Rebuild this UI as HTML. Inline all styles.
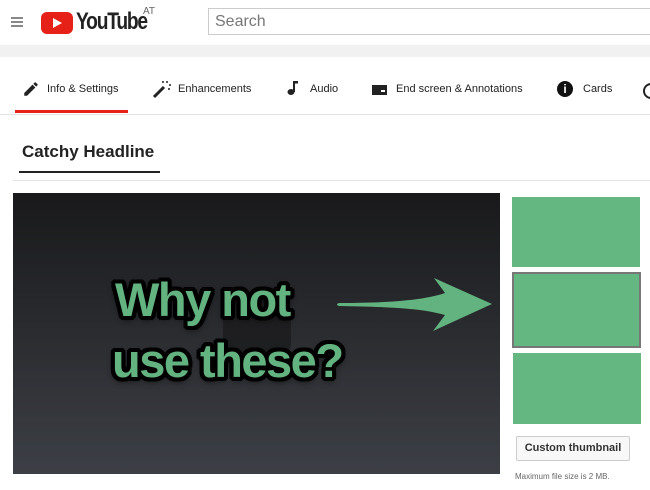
<!DOCTYPE html>
<html><head><style>
body{margin:0;width:650px;height:490px;overflow:hidden;background:#fff;font-family:"Liberation Sans",sans-serif;position:relative}
.a{position:absolute}
.tab{position:absolute;top:83px;font-size:11px;color:#222;white-space:nowrap}
.big{position:absolute;font-weight:bold;font-size:47px;color:#62b37f;letter-spacing:-1.5px;white-space:nowrap;
text-shadow:4px 0 0 #000,-4px 0 0 #000,0 4px 0 #000,0 -4px 0 #000,3px 3px 0 #000,-3px 3px 0 #000,3px -3px 0 #000,-3px -3px 0 #000,2px 4px 0 #000,-2px 4px 0 #000,2px -4px 0 #000,-2px -4px 0 #000,4px 2px 0 #000,-4px 2px 0 #000,4px -2px 0 #000,-4px -2px 0 #000,0 3px 8px #000}
.g{position:absolute;background:#65b782}
</style></head><body>
<div class="a" style="left:11px;top:17px;width:12px;height:2px;background:#888;box-shadow:0 4px 0 #888,0 8px 0 #888"></div>
<div class="a" style="left:41px;top:12px;width:32px;height:22px;background:#e62117;border-radius:6px"></div>
<div class="a" style="left:53px;top:18px;width:0;height:0;border-left:9px solid #fff;border-top:5px solid transparent;border-bottom:5px solid transparent"></div>
<div class="a" style="left:76px;top:8px;font-size:24px;font-weight:bold;letter-spacing:-1.5px;color:#222;transform:scaleX(.8);transform-origin:left">YouTube</div>
<div class="a" style="left:143px;top:6px;font-size:10px;color:#666">AT</div>
<div class="a" style="left:208px;top:8px;width:450px;height:27px;border:1px solid #ccc;box-sizing:border-box"></div>
<div class="a" style="left:215px;top:13px;font-size:16px;color:#777">Search</div>
<div class="a" style="left:0;top:45px;width:650px;height:12px;background:#f1f1f1"></div>

<svg class="a" style="left:22px;top:80px" width="18" height="18" viewBox="0 0 24 24"><path d="M3 17.25V21h3.75L17.8 9.94l-3.75-3.75L3 17.25zM20.7 7.04a1 1 0 000-1.41l-2.34-2.34a1 1 0 00-1.41 0l-1.83 1.83 3.75 3.75 1.83-1.83z" fill="#222"/></svg>
<div class="tab" style="left:47px">Info &amp; Settings</div>
<svg class="a" style="left:152px;top:79px" width="20" height="20" viewBox="0 0 20 20"><path d="M2 18L12 8" stroke="#222" stroke-width="3"/><circle cx="15" cy="3" r="1" fill="#222"/><circle cx="18" cy="6" r="1" fill="#222"/><circle cx="11" cy="3" r="1" fill="#222"/><circle cx="17" cy="10" r="1" fill="#222"/></svg>
<div class="tab" style="left:178px">Enhancements</div>
<svg class="a" style="left:287px;top:80px" width="12" height="16" viewBox="0 0 12 16"><ellipse cx="4" cy="12" rx="3.5" ry="3" fill="#222"/><rect x="6" y="1" width="2" height="11" fill="#222"/><rect x="6" y="1" width="5" height="2.5" fill="#222"/></svg>
<div class="tab" style="left:310px">Audio</div>
<div class="a" style="left:372px;top:85px;width:15px;height:10px;background:#222"></div>
<div class="a" style="left:381px;top:90px;width:4px;height:2px;background:#fff"></div>
<div class="tab" style="left:396px">End screen &amp; Annotations</div>
<div class="a" style="left:557px;top:81px;width:16px;height:16px;border-radius:50%;background:#111;color:#fff;font-size:12px;font-weight:bold;text-align:center;line-height:16px">i</div>
<div class="tab" style="left:583px">Cards</div>
<div class="a" style="left:643px;top:83px;width:12px;height:12px;border-radius:50%;border:2px solid #222"></div>
<div class="a" style="left:15px;top:110px;width:113px;height:3px;background:#e62117"></div>
<div class="a" style="left:0;top:114px;width:650px;height:1px;background:#e3e3e3"></div>

<div class="a" style="left:22px;top:142px;font-size:17px;font-weight:bold;color:#222">Catchy Headline</div>
<div class="a" style="left:19px;top:171px;width:141px;height:2px;background:#222"></div>
<div class="a" style="left:13px;top:180px;width:637px;height:1px;background:#e3e3e3"></div>

<div class="a" style="left:13px;top:193px;width:487px;height:281px;background:linear-gradient(#19191b,#3c3f45)"></div>
<div class="a" style="left:223px;top:300px;width:68px;height:55px;border-radius:12px;background:#1b1b1d;opacity:.8"></div>
<div class="big" style="left:115px;top:272px">Why not</div>
<div class="big" style="left:112px;top:333px">use these?</div>
<svg class="a" style="left:330px;top:275px" width="165" height="60" viewBox="0 0 165 60"><path d="M9 28 C60 28 95 25 115 18 L104 3 L162 29 L103 56 L115 40 C90 33 60 32 9 31 Q5 29.5 9 28Z" fill="#62b37f"/></svg>

<div class="g" style="left:512px;top:197px;width:128px;height:70px"></div>
<div class="g" style="left:512px;top:272px;width:129px;height:76px;border:2px solid #777;box-sizing:border-box"></div>
<div class="g" style="left:513px;top:353px;width:128px;height:71px"></div>
<div class="a" style="left:516px;top:436px;width:114px;height:25px;border:1px solid #ccc;border-radius:2px;background:#f8f8f8;box-sizing:border-box;font-size:11px;font-weight:bold;color:#333;text-align:center;line-height:23px">Custom thumbnail</div>
<div class="a" style="left:515px;top:472px;font-size:8px;color:#666">Maximum file size is 2 MB.</div>
</body></html>
